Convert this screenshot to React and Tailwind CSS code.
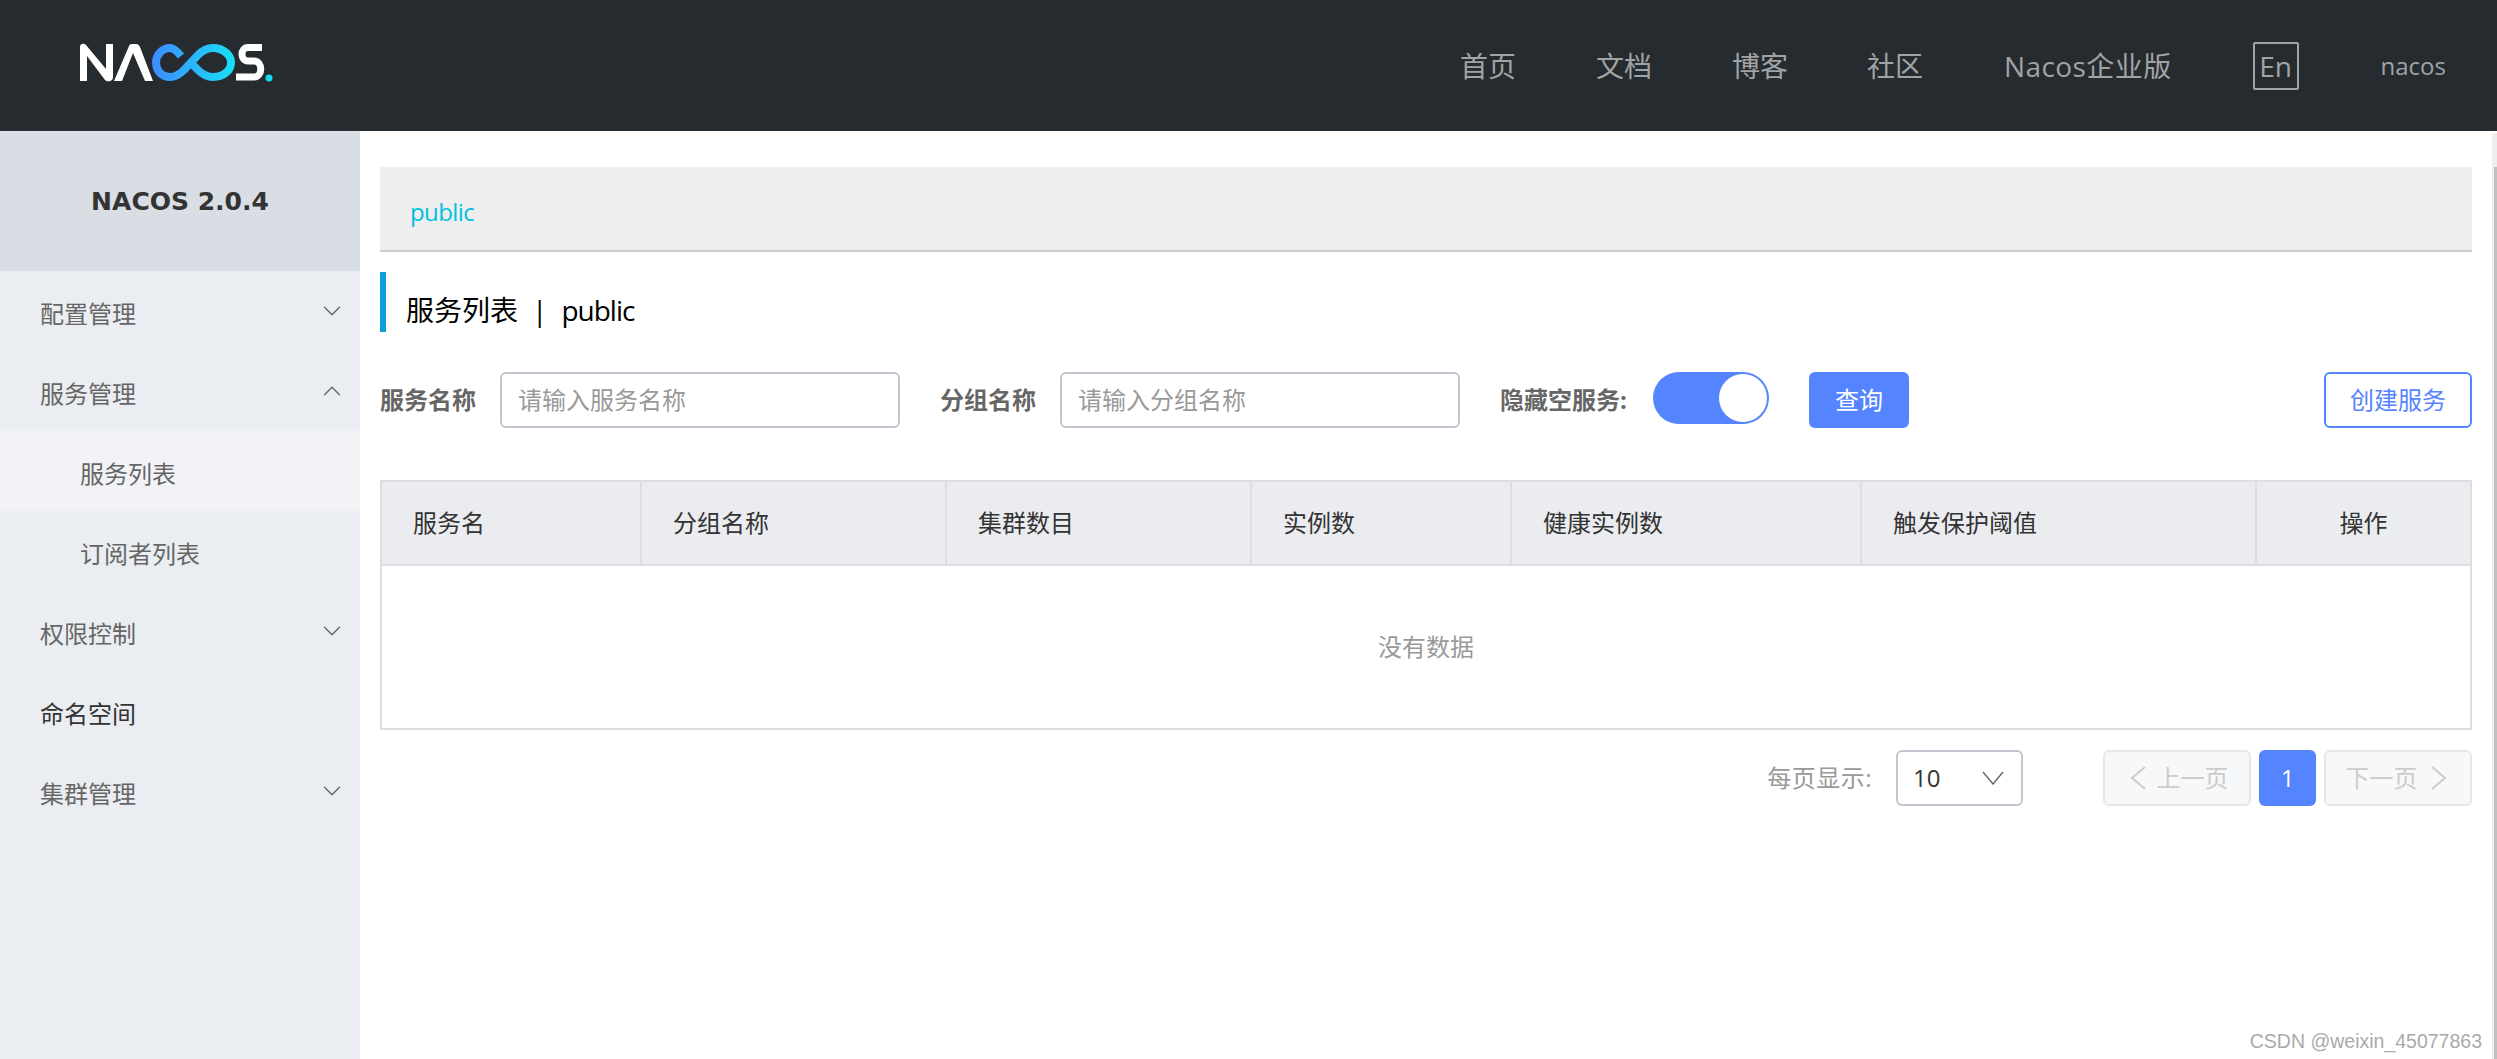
import React from 'react';
import { ChevronDown, ChevronUp } from 'lucide-react';

const FONT = "font-['Open_Sans','Noto_Sans_CJK_SC',sans-serif]";

const NavLink = ({ children, className = '' }) => (
  <a className={`text-[28px] leading-[40px] text-[#a0a3a6] ${className}`}>{children}</a>
);

const MenuItem = ({ label, open, dark, sub, active, arrow = true }) => (
  <div
    className={`flex h-[80px] items-center justify-between pt-[6px] text-[24px] ${sub ? 'pl-[80px]' : 'pl-[40px]'} pr-[13px] ${dark ? 'text-[#333]' : 'text-[#666]'} ${active ? 'bg-[#f2f3f7]' : ''}`}
  >
    <span>{label}</span>
    {arrow && !sub && (open
      ? <ChevronUp className="mb-[6px] h-[30px] w-[30px] text-[#666]" strokeWidth={1.1} />
      : <ChevronDown className="mb-[6px] h-[30px] w-[30px] text-[#666]" strokeWidth={1.1} />)}
  </div>
);

const Logo = () => (
  <svg width="194" height="40" viewBox="0 0 194 40" className="mb-[5px] block">
    <defs>
      <linearGradient id="inf" gradientUnits="userSpaceOnUse" x1="72" y1="0" x2="155" y2="0">
        <stop offset="0" stopColor="#3d8bff" />
        <stop offset="1" stopColor="#19e0f6" />
      </linearGradient>
    </defs>
    <path d="M0 38V4C0 0 4 0 6 2L26 26V1H33V34C33 39 27 39 25 37L7 13V38Z" fill="#fff" />
    <path d="M34 38L49 3C50 1 51 1 53 1H56C58 1 59 2 60 4L73 38H65L53 10L42 38Z" fill="#fff" />
    <path
      d="M101 13C97 8 93 5 90 5C82 5 76 12 76 19.5C76 28 82 34 90 34C96 34 100 31 104 27L118 12C122 8 127 5 133 5C143 5 151 12 151 19.5C151 28 143 34 133 34C127 34 122 31 118 27L111 20"
      fill="none"
      stroke="url(#inf)"
      strokeWidth="8"
    />
    <path d="M182 4.5H168C160 4.5 160 18 168 18H174C183 18 183 34 174 34H156" fill="none" stroke="#fff" strokeWidth="7" />
    <circle cx="189" cy="35" r="3.5" fill="#19d8ee" />
  </svg>
);

const Field = ({ placeholder }) => (
  <div className="flex h-[56px] w-[400px] items-center rounded-[6px] border-2 border-[#c4c6cf] bg-white px-[16px] text-[24px] text-[#999]">
    {placeholder}
  </div>
);

const Label = ({ children, className = '' }) => (
  <span className={`text-[24px] font-bold text-[#666] ${className}`}>{children}</span>
);

const columns = [
  { title: '服务名', w: 'w-[260px]' },
  { title: '分组名称', w: 'w-[305px]' },
  { title: '集群数目', w: 'w-[305px]' },
  { title: '实例数', w: 'w-[260px]' },
  { title: '健康实例数', w: 'w-[350px]' },
  { title: '触发保护阈值', w: 'w-[395px]' },
];

export default function App() {
  return (
    <div className={`relative flex h-[1059px] w-[2497px] flex-col overflow-hidden bg-white ${FONT}`}>
      {/* 顶部导航 */}
      <header className="flex h-[131px] shrink-0 items-center bg-[#262b30] pl-[80px]">
        <Logo />
        <nav className="ml-auto flex items-center pr-[51px]">
          <NavLink className="mr-[80px]">首页</NavLink>
          <NavLink className="mr-[80px]">文档</NavLink>
          <NavLink className="mr-[79px]">博客</NavLink>
          <NavLink className="mr-[81px]">社区</NavLink>
          <NavLink className="mr-[81px] tracking-[0.4px]">Nacos企业版</NavLink>
          <span className="mr-[82px] flex h-[48px] w-[46px] items-center justify-center rounded-[2px] border-2 border-[#a0a3a6] text-[28px] text-[#a0a3a6]">En</span>
          <span className="text-[24px] text-[#a0a3a6]">nacos</span>
        </nav>
      </header>

      <div className="flex min-h-0 flex-1">
        {/* 侧边栏 */}
        <aside className="w-[360px] shrink-0 bg-[#eaedf1]">
          <div className="flex h-[140px] items-center justify-center bg-[#d9dde4] pt-[2px] font-['DejaVu_Sans',sans-serif] text-[25px] font-bold text-[#333]">
            NACOS 2.0.4
          </div>
          <MenuItem label="配置管理" />
          <MenuItem label="服务管理" open />
          <MenuItem label="服务列表" sub active />
          <MenuItem label="订阅者列表" sub />
          <MenuItem label="权限控制" />
          <MenuItem label="命名空间" dark arrow={false} />
          <MenuItem label="集群管理" />
        </aside>

        {/* 主内容 */}
        <main className="flex w-[2112px] shrink-0 flex-col pl-[20px] pt-[36px]">
          <div className="flex h-[85px] items-center border-b-2 border-[#ccc] bg-[#eee] pl-[30px] pt-[6px] text-[24px] tracking-[-0.6px] text-[#00c1de]">
            public
          </div>

          <div className="mt-[20px] flex h-[60px] items-center border-l-[6px] border-[#0a9fd6] pl-[20px] pt-[16px] text-[28px] text-black">
            <span>服务列表</span>
            <span className="mx-[14px]">|</span>
            <span className="tracking-[-1px]">public</span>
          </div>

          <div className="mt-[40px] flex h-[56px] items-start">
            <Label className="mt-[10px] w-[120px]">服务名称</Label>
            <Field placeholder="请输入服务名称" />
            <Label className="ml-[40px] mt-[10px] w-[120px]">分组名称</Label>
            <Field placeholder="请输入分组名称" />
            <Label className="ml-[40px] mt-[10px] w-[153px]">隐藏空服务:</Label>
            <div className="flex h-[52px] w-[116px] items-center justify-end rounded-full bg-[#5584ff] pr-[2px]">
              <div className="h-[48px] w-[48px] rounded-full bg-white" />
            </div>
            <button className="ml-[40px] h-[56px] w-[100px] rounded-[6px] bg-[#5584ff] text-[24px] text-white">查询</button>
            <button className="ml-auto h-[56px] w-[148px] rounded-[6px] border-2 border-[#5584ff] bg-white text-[24px] text-[#5584ff]">创建服务</button>
          </div>

          <div className="mt-[52px] w-[2092px] border-2 border-[#dcdee3]">
            <div className="flex h-[84px] border-b-2 border-[#dcdee3] bg-[#ebecf0] text-[24px] text-[#333]">
              {columns.map((c) => (
                <div key={c.title} className={`flex items-center border-r-2 border-[#dcdee3] pl-[31px] ${c.w}`}>{c.title}</div>
              ))}
              <div className="flex flex-1 items-center justify-center">操作</div>
            </div>
            <div className="flex h-[162px] items-center justify-center text-[24px] text-[#999]">没有数据</div>
          </div>

          <div className="mt-[20px] flex h-[56px] items-center">
            <span className="ml-auto text-[24px] tracking-[0.5px] text-[#999]">每页显示:</span>
            <div className="ml-[24px] flex h-[56px] w-[127px] items-center justify-between rounded-[6px] border-2 border-[#c4c6cf] pl-[15px] pr-[17px] text-[24px] text-[#333]">
              <span>10</span>
              <svg width="22" height="14" viewBox="0 0 22 14" fill="none" stroke="#666" strokeWidth="1.4">
                <path d="M1 1L11 13L21 1" />
              </svg>
            </div>
            <button className="ml-[80px] flex h-[56px] w-[148px] items-center justify-center gap-[11px] rounded-[6px] border-2 border-[#e6e7eb] bg-[#f7f8fa] pl-[4px] text-[24px] text-[#ccc]">
              <svg width="16" height="24" viewBox="0 0 16 24" fill="none" stroke="#ccc" strokeWidth="2">
                <path d="M15 1L2 12L15 23" />
              </svg>
              <span>上一页</span>
            </button>
            <button className="ml-[8px] h-[56px] w-[57px] rounded-[6px] bg-[#5584ff] text-[24px] text-white">1</button>
            <button className="ml-[8px] flex h-[56px] w-[148px] items-center justify-center gap-[13px] rounded-[6px] border-2 border-[#e6e7eb] bg-[#f7f8fa] pr-[4px] text-[24px] text-[#ccc]">
              <span>下一页</span>
              <svg width="16" height="24" viewBox="0 0 16 24" fill="none" stroke="#ccc" strokeWidth="2">
                <path d="M1 1L14 12L1 23" />
              </svg>
            </button>
          </div>
        </main>

        {/* 滚动条 */}
        <div className="ml-auto mt-[2px] flex w-[5px] justify-end bg-[#eee] pt-[34px]">
          <div className="w-[3px] bg-[#c0c0c0]" />
        </div>
      </div>

      {/* 水印 */}
      <span className="absolute right-[15px] top-[1030px] font-['Liberation_Sans',sans-serif] text-[19.5px] leading-[23px] text-[#aaa]">CSDN @weixin_45077863</span>
    </div>
  );
}
